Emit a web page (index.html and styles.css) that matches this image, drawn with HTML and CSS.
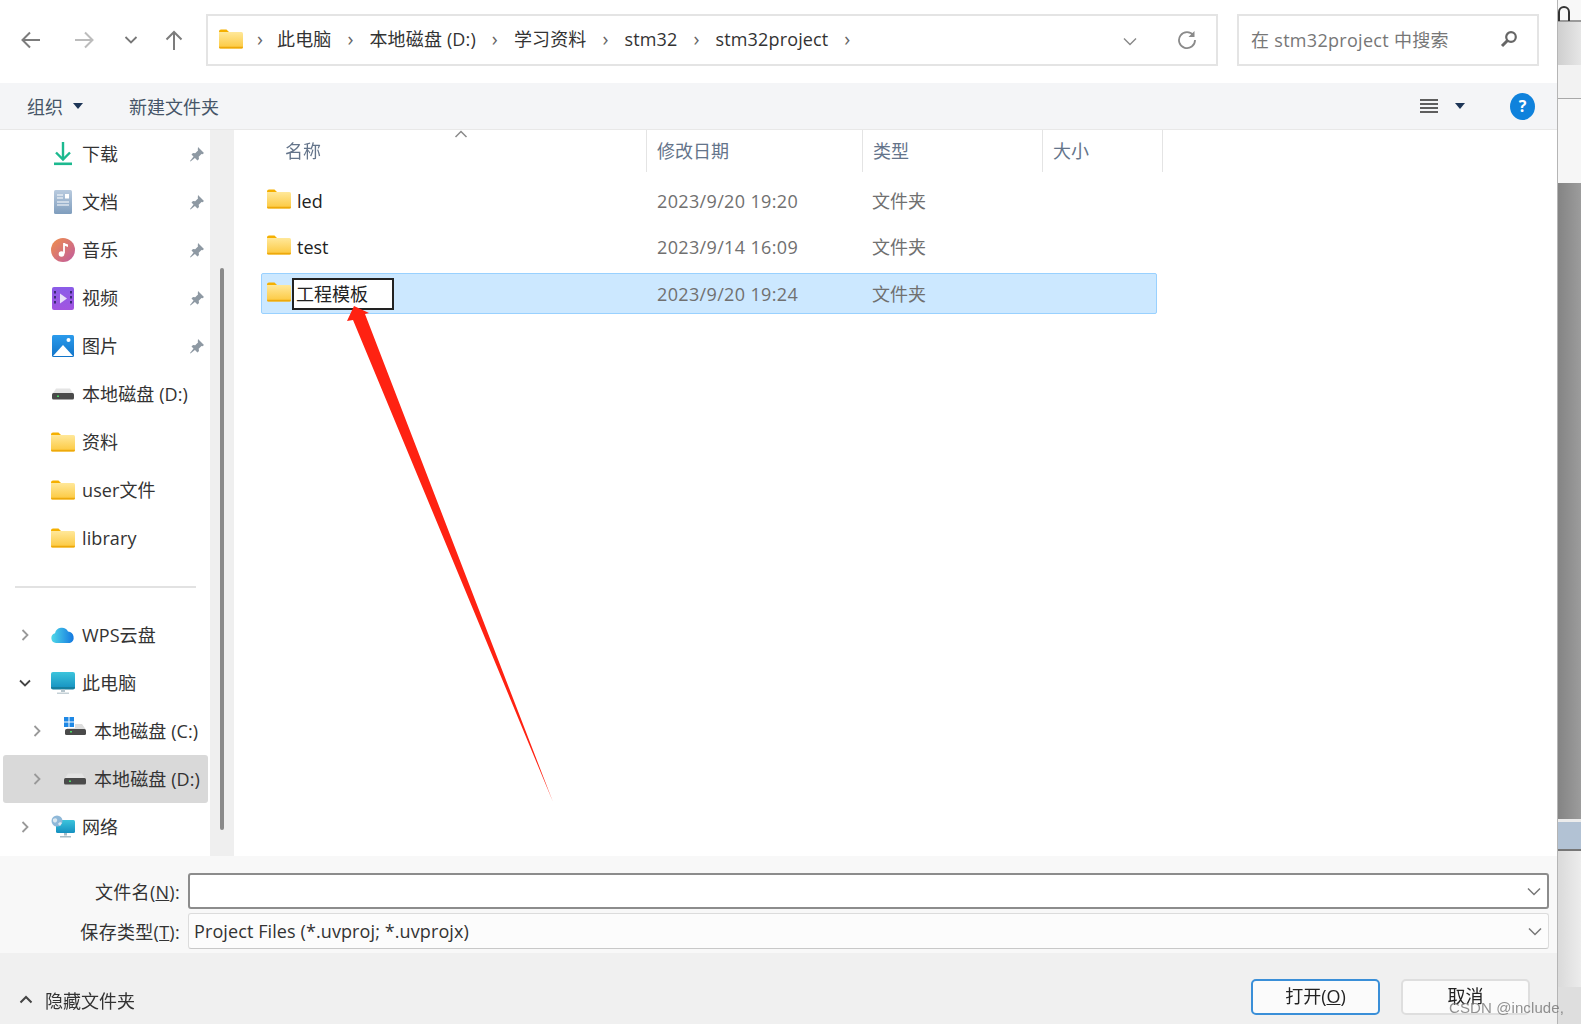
FILE: index.html
```html
<!DOCTYPE html>
<html lang="zh-CN">
<head>
    <meta charset="UTF-8">
    <title>打开项目</title>
    <link rel="stylesheet" href="styles.css">
</head>
<body>
    <!-- 图标 -->
    <svg class="sprite" width="0" height="0">
        <defs>
            <linearGradient id="gFolder" x1="0" y1="0" x2="0" y2="1"><stop offset="0" stop-color="#ffe89a"/><stop offset="1" stop-color="#fcc83d"/></linearGradient>
            <linearGradient id="gDoc" x1="0" y1="0" x2="0" y2="1"><stop offset="0" stop-color="#b9cbdf"/><stop offset="1" stop-color="#7f9dbd"/></linearGradient>
            <linearGradient id="gMusic" x1="0" y1="0" x2="1" y2="1"><stop offset="0" stop-color="#f0904a"/><stop offset="1" stop-color="#c05aa0"/></linearGradient>
            <linearGradient id="gVideo" x1="0" y1="0" x2="0" y2="1"><stop offset="0" stop-color="#8a5ce8"/><stop offset="1" stop-color="#a254e0"/></linearGradient>
            <linearGradient id="gPic" x1="0" y1="0" x2="0" y2="1"><stop offset="0" stop-color="#2b9bec"/><stop offset="1" stop-color="#1274c8"/></linearGradient>
            <linearGradient id="gCloud" x1="0" y1="0" x2="1" y2="0"><stop offset="0" stop-color="#4fd8e8"/><stop offset="1" stop-color="#1478e0"/></linearGradient>
            <linearGradient id="gScreen" x1="0" y1="0" x2="0" y2="1"><stop offset="0" stop-color="#3cc4dc"/><stop offset="1" stop-color="#1590c0"/></linearGradient>

            <symbol id="i-folder" viewBox="0 0 24 20">
                <path d="M0 2.500A2 2 0 0 1 2 .5h5.500l2.500 2.500H0z" fill="#f5b000"/>
                <path d="M0 3h22.500a1.500 1.500 0 0 1 1.500 1.500V18a1.500 1.500 0 0 1-1.500 1.500H1.500A1.500 1.500 0 0 1 0 18z" fill="url(#gFolder)"/>
                <path d="M0 17.800h24V18a1.500 1.500 0 0 1-1.500 1.500H1.500A1.500 1.500 0 0 1 0 18z" fill="#eda90c"/>
            </symbol>
            <symbol id="i-pin" viewBox="0 0 16 16">
                <path d="M9 1l6 6-1.500 1.200-1-.2-2.800 2.800.3 2.200-1.500 1.500L2.500 8.500 4 7l2.200.3L9 4.500l-.2-1z" fill="#8e99a3"/>
                <path d="M5 10l-4 5 .5.5 5-4z" fill="#8e99a3"/>
            </symbol>
            <symbol id="i-drive" viewBox="0 0 22 12">
                <path d="M4 .5h14l3.500 5.500H.5z" fill="#e4e4e4"/>
                <rect x="0" y="5" width="22" height="6.500" rx="1.500" fill="#4a4a4a"/>
                <rect x="5" y="7.500" width="2" height="1.500" fill="#4cd964"/>
            </symbol>
        </defs>
    </svg>

    <div class="window">
        <div class="dialog">
            <!-- 地址栏 -->
            <div class="navbar">
                <div class="nav-buttons">
                    <svg class="nav-btn" width="22" height="20" viewBox="0 0 22 20"><path d="M20 10H3M10 2.500L2.500 10l7.500 7.500" fill="none" stroke="#7c7c7c" stroke-width="2"/></svg>
                    <svg class="nav-btn" width="22" height="20" viewBox="0 0 22 20"><path d="M2 10h17M12 2.500l7.500 7.500-7.500 7.500" fill="none" stroke="#bcbcbc" stroke-width="2"/></svg>
                    <svg class="nav-btn" width="14" height="10" viewBox="0 0 14 10"><path d="M1.500 2l5.500 5.500L12.500 2" fill="none" stroke="#777" stroke-width="1.800"/></svg>
                    <svg class="nav-btn" width="20" height="22" viewBox="0 0 20 22"><path d="M10 21V3M2.500 10.500L10 3l7.500 7.500" fill="none" stroke="#7c7c7c" stroke-width="2"/></svg>
                </div>
                <div class="address">
                    <svg class="addr-folder" width="24" height="20"><use href="#i-folder"/></svg>
                    <span class="crumb-sep">›</span><span>此电脑</span>
                    <span class="crumb-sep">›</span><span>本地磁盘 (D:)</span>
                    <span class="crumb-sep">›</span><span>学习资料</span>
                    <span class="crumb-sep">›</span><span>stm32</span>
                    <span class="crumb-sep">›</span><span>stm32project</span>
                    <span class="crumb-sep">›</span>
                    <svg class="addr-down" width="14" height="9" viewBox="0 0 14 9"><path d="M1 1.500l6 6 6-6" fill="none" stroke="#888" stroke-width="1.400"/></svg>
                    <svg class="addr-refresh" width="20" height="20" viewBox="0 0 20 20"><path d="M16.500 5.500A8 8 0 1 0 18 10" fill="none" stroke="#8a8a8a" stroke-width="1.800"/><path d="M17.500 1v6h-6z" fill="#8a8a8a"/></svg>
                </div>
                <div class="search">
                    <span>在 stm32project 中搜索</span>
                    <svg width="18" height="18" viewBox="0 0 18 18"><circle cx="11" cy="7" r="4.800" fill="none" stroke="#666" stroke-width="2.200"/><path d="M7.500 10.500L2 16" stroke="#666" stroke-width="3"/></svg>
                </div>
            </div>

            <!-- 工具栏 -->
            <div class="toolbar">
                <span class="tool">组织</span><i class="tool-caret"></i>
                <span class="tool tool-new">新建文件夹</span>
                <svg class="view-icon" width="18" height="16" viewBox="0 0 18 16"><path d="M0 2h18M0 6h18M0 10h18M0 14h18" stroke="#2c2c2c" stroke-width="1.600"/></svg>
                <i class="tool-caret view-caret"></i>
                <span class="help">?</span>
            </div>

            <div class="content">
                <!-- 左侧导航 -->
                <div class="sidebar">
                    <div class="tree-row">
                        <span class="caret"></span>
                        <svg class="tree-icon" width="26" height="26" viewBox="0 0 26 26"><path d="M13 1v17M6 11.500l7 7 7-7" fill="none" stroke="#1cb98f" stroke-width="2.400"/><rect x="4" y="21.500" width="18" height="2.600" fill="#1cb98f"/></svg>
                        <span>下载</span>
                        <svg class="pin" width="16" height="16"><use href="#i-pin"/></svg>
                    </div>
                    <div class="tree-row">
                        <span class="caret"></span>
                        <svg class="tree-icon" width="26" height="26" viewBox="0 0 26 26"><rect x="4" y="1" width="18" height="24" rx="1.500" fill="url(#gDoc)"/><path d="M7 6h6M7 9h6M7 13h12M7 16h12" stroke="#fff" stroke-width="1.200"/><rect x="15" y="5" width="4" height="4.500" fill="#fff"/></svg>
                        <span>文档</span>
                        <svg class="pin" width="16" height="16"><use href="#i-pin"/></svg>
                    </div>
                    <div class="tree-row">
                        <span class="caret"></span>
                        <svg class="tree-icon" width="26" height="26" viewBox="0 0 26 26"><circle cx="13" cy="13" r="12" fill="url(#gMusic)"/><path d="M14 6v10.500" stroke="#fff" stroke-width="1.800"/><path d="M14 6l4 1.500v2.500l-4-1.500z" fill="#fff"/><circle cx="11.500" cy="17" r="2.800" fill="#fff"/></svg>
                        <span>音乐</span>
                        <svg class="pin" width="16" height="16"><use href="#i-pin"/></svg>
                    </div>
                    <div class="tree-row">
                        <span class="caret"></span>
                        <svg class="tree-icon" width="26" height="26" viewBox="0 0 26 26"><rect x="2" y="2" width="22" height="23" rx="2" fill="url(#gVideo)"/><path d="M4 6h2v2.500H4zM4 11h2v2.500H4zM4 16h2v2.500H4zM20 6h2v2.500h-2zM20 11h2v2.500h-2zM20 16h2v2.500h-2z" fill="#3c2a78"/><path d="M10 8.500l7 5-7 5z" fill="#e8e0f8"/></svg>
                        <span>视频</span>
                        <svg class="pin" width="16" height="16"><use href="#i-pin"/></svg>
                    </div>
                    <div class="tree-row">
                        <span class="caret"></span>
                        <svg class="tree-icon" width="26" height="26" viewBox="0 0 26 26"><rect x="2" y="2" width="22" height="22" rx="1.500" fill="url(#gPic)"/><path d="M3 23l10-11 10 11z" fill="#fff"/><circle cx="18.500" cy="7" r="2" fill="#fff"/></svg>
                        <span>图片</span>
                        <svg class="pin" width="16" height="16"><use href="#i-pin"/></svg>
                    </div>
                    <div class="tree-row">
                        <span class="caret"></span>
                        <svg class="tree-icon" width="26" height="12"><use href="#i-drive" x="2" width="22" height="12"/></svg>
                        <span>本地磁盘 (D:)</span>
                    </div>
                    <div class="tree-row">
                        <span class="caret"></span>
                        <svg class="tree-icon" width="24" height="20"><use href="#i-folder"/></svg>
                        <span>资料</span>
                    </div>
                    <div class="tree-row">
                        <span class="caret"></span>
                        <svg class="tree-icon" width="24" height="20"><use href="#i-folder"/></svg>
                        <span>user文件</span>
                    </div>
                    <div class="tree-row">
                        <span class="caret"></span>
                        <svg class="tree-icon" width="24" height="20"><use href="#i-folder"/></svg>
                        <span>library</span>
                    </div>

                    <div class="tree-divider"></div>

                    <div class="tree-row">
                        <span class="caret"><svg width="8" height="12" viewBox="0 0 8 12"><path d="M1.500 1l5 5-5 5" fill="none" stroke="#999" stroke-width="1.800"/></svg></span>
                        <svg class="tree-icon" width="26" height="18" viewBox="0 0 26 18"><path d="M6 17a5 5 0 0 1-1-9.800A7 7 0 0 1 18 5.500 6 6 0 0 1 20 17z" fill="url(#gCloud)"/></svg>
                        <span>WPS云盘</span>
                    </div>
                    <div class="tree-row">
                        <span class="caret caret-open"><svg width="12" height="8" viewBox="0 0 12 8"><path d="M1 1.500l5 5 5-5" fill="none" stroke="#444" stroke-width="1.800"/></svg></span>
                        <svg class="tree-icon" width="26" height="24" viewBox="0 0 26 24"><rect x="1" y="1" width="24" height="17" rx="2" fill="url(#gScreen)"/><path d="M1 16h24v.500a2 2 0 0 1-2 2H3a2 2 0 0 1-2-2z" fill="#167f9f"/><path d="M11 18.500h4V21h-4z" fill="#b4c4cc"/><path d="M7 21.500h12V23H7z" fill="#c4d0d6"/></svg>
                        <span>此电脑</span>
                    </div>
                    <div class="tree-row tree-sub">
                        <span class="caret"><svg width="8" height="12" viewBox="0 0 8 12"><path d="M1.500 1l5 5-5 5" fill="none" stroke="#999" stroke-width="1.800"/></svg></span>
                        <svg class="tree-icon icon-up" width="24" height="20" viewBox="0 0 24 20"><path d="M1 1h4.500v4.500H1zM6.500 1H11v4.500H6.500zM1 6.500h4.500V11H1zM6.500 6.500H11V11H6.500z" fill="#1e88e5"/><path d="M12 8h7l3.500 5H4v-1h8z" fill="#ddd"/><rect x="2" y="13" width="21" height="6" rx="1.500" fill="#4a4a4a"/><rect x="7" y="15" width="2" height="1.500" fill="#4cd964"/></svg>
                        <span>本地磁盘 (C:)</span>
                    </div>
                    <div class="tree-row tree-sub is-current">
                        <span class="caret"><svg width="8" height="12" viewBox="0 0 8 12"><path d="M1.500 1l5 5-5 5" fill="none" stroke="#999" stroke-width="1.800"/></svg></span>
                        <svg class="tree-icon" width="26" height="12"><use href="#i-drive" x="2" width="22" height="12"/></svg>
                        <span>本地磁盘 (D:)</span>
                    </div>
                    <div class="tree-row">
                        <span class="caret"><svg width="8" height="12" viewBox="0 0 8 12"><path d="M1.500 1l5 5-5 5" fill="none" stroke="#999" stroke-width="1.800"/></svg></span>
                        <svg class="tree-icon" width="26" height="24" viewBox="0 0 26 24"><rect x="6" y="5" width="19" height="13" rx="1.500" fill="url(#gScreen)"/><path d="M14 18h3v2.500h-3zM10 21h11v1.500H10z" fill="#a8bcc6"/><circle cx="7" cy="6" r="5.500" fill="#8fb8d8"/><path d="M3 4c3-2 5 0 4 2s-3 2-4 0zM8 9c1-2 3-2 4-1l-2 3z" fill="#dce8f0"/></svg>
                        <span>网络</span>
                    </div>
                </div>
                <div class="tree-scroll"><div class="tree-thumb"></div></div>

                <!-- 文件列表 -->
                <div class="files">
                    <div class="file-head">
                        <div class="col-name">名称
                            <svg class="sort-arrow" width="14" height="8" viewBox="0 0 14 8"><path d="M1.500 7L7 1.500 12.500 7" fill="none" stroke="#8a8a8a" stroke-width="1.500"/></svg>
                        </div>
                        <div class="col">修改日期</div>
                        <div class="col">类型</div>
                        <div class="col">大小</div>
                    </div>
                    <div class="file-row">
                        <div class="file-name"><svg width="24" height="20"><use href="#i-folder"/></svg><span>led</span></div>
                        <div class="file-date">2023/9/20 19:20</div>
                        <div class="file-type">文件夹</div>
                    </div>
                    <div class="file-row">
                        <div class="file-name"><svg width="24" height="20"><use href="#i-folder"/></svg><span>test</span></div>
                        <div class="file-date">2023/9/14 16:09</div>
                        <div class="file-type">文件夹</div>
                    </div>
                    <div class="file-row is-selected">
                        <div class="file-name"><svg width="24" height="20"><use href="#i-folder"/></svg><span class="rename">工程模板</span></div>
                        <div class="file-date">2023/9/20 19:24</div>
                        <div class="file-type">文件夹</div>
                    </div>
                </div>
            </div>

            <!-- 文件名 -->
            <div class="form">
                <div class="form-row">
                    <label>文件名(<u>N</u>):</label>
                    <div class="field field-active">
                        <svg width="14" height="9" viewBox="0 0 14 9"><path d="M1 1.500l6 6 6-6" fill="none" stroke="#777" stroke-width="1.500"/></svg>
                    </div>
                </div>
                <div class="form-row">
                    <label>保存类型(<u>T</u>):</label>
                    <div class="field">
                        <span class="field-text">Project Files (*.uvproj; *.uvprojx)</span>
                        <svg width="14" height="9" viewBox="0 0 14 9"><path d="M1 1.500l6 6 6-6" fill="none" stroke="#777" stroke-width="1.500"/></svg>
                    </div>
                </div>
            </div>

            <div class="footer">
                <div class="hide-folders">
                    <svg width="14" height="9" viewBox="0 0 14 9"><path d="M1.500 7.500L7 2l5.500 5.500" fill="none" stroke="#444" stroke-width="2"/></svg>
                    <span>隐藏文件夹</span>
                </div>
                <div class="buttons">
                    <button class="btn btn-primary">打开(<u>O</u>)</button>
                    <button class="btn">取消</button>
                </div>
            </div>
        </div>

        <!-- 右边露出的后面窗口 -->
        <div class="behind">
            <div class="behind-top"><svg width="12" height="16" viewBox="0 0 12 16"><path d="M1 16V7a5 5 0 0 1 10 0v9" fill="none" stroke="#333" stroke-width="2"/></svg></div>
            <div class="behind-tab"></div>
            <div class="behind-panel"></div>
            <div class="behind-dark"></div>
            <div class="behind-blue"></div>
            <div class="behind-low"></div>
            <div class="behind-end"></div>
        </div>
    </div>

    <!-- 红色箭头 -->
    <svg class="red-arrow" width="1581" height="1024" viewBox="0 0 1581 1024"><polygon points="354,306 369,313 365,314 553,802 353,320 347,321" fill="#ff2212"/></svg>
    <div class="watermark">CSDN @include,</div>
</body>
</html>
```

FILE: styles.css
```css
* {
    box-sizing: border-box;
}
html, body {
    margin: 0;
    height: 100%;
    overflow: hidden;
}
body {
    position: relative;
    font-family: "Open Sans", "Noto Sans CJK SC", sans-serif;
    font-size: 18px;
    color: #333;
    background-color: #fff;
}
.sprite {
    position: absolute;
}
svg {
    display: block;
    flex: none;
}
.window {
    display: flex;
    height: 1024px;
    filter: blur(0.5px);
}
.dialog {
    width: 1557px;
    display: flex;
    flex-direction: column;
    background-color: #fff;
}

/* 地址栏 */
.navbar {
    height: 83px;
    padding-top: 14px;
    display: flex;
    align-items: flex-start;
}
.nav-buttons {
    width: 206px;
    height: 52px;
    display: flex;
    align-items: center;
    padding-left: 20px;
}
.nav-btn {
    margin-right: 31px;
}
.nav-btn:nth-child(3) {
    margin-right: 26px;
    margin-left: -2px;
}
.address {
    width: 1012px;
    height: 52px;
    display: flex;
    align-items: center;
    border: 2px solid #e4e4e4;
    padding: 0 0 3px 11px;
    line-height: 1;
    letter-spacing: 0.15px;
}
.crumb-sep {
    width: 38px;
    text-align: center;
    color: #666;
    font-size: 20px;
}
.addr-folder + .crumb-sep {
    width: 34px;
}
.addr-down {
    margin-left: auto;
    margin-top: 5px;
}
.addr-refresh {
    margin-left: 40px;
    margin-right: 19px;
    margin-top: 3px;
}
.search {
    width: 302px;
    height: 52px;
    margin-left: 19px;
    display: flex;
    align-items: center;
    justify-content: space-between;
    border: 2px solid #e4e4e4;
    padding: 0 19px 3px 12px;
    color: #777;
    letter-spacing: 0.3px;
}

/* 工具栏 */
.toolbar {
    height: 47px;
    display: flex;
    align-items: center;
    background-color: #f4f5f7;
    border-bottom: 1px solid #e8e8e8;
    padding-left: 27px;
    color: #465568;
}
.tool-caret {
    width: 0;
    height: 0;
    margin-left: 10px;
    border-left: 5.5px solid transparent;
    border-right: 5.5px solid transparent;
    border-top: 6px solid #1d3557;
}
.tool-new {
    margin-left: 46px;
}
.view-icon {
    margin-left: auto;
}
.view-caret {
    margin-left: 17px;
}
.help {
    width: 25px;
    height: 27px;
    margin-left: 45px;
    margin-right: 22px;
    border-radius: 50%;
    background-color: #0f82dc;
    color: #fff;
    font-size: 16px;
    font-weight: 700;
    line-height: 27px;
    text-align: center;
}

/* 左侧导航 */
.content {
    flex: 1;
    display: flex;
    min-height: 0;
}
.sidebar {
    width: 210px;
    line-height: 1;
    overflow: hidden;
}
.tree-row {
    height: 48px;
    margin: 0 2px 0 3px;
    display: flex;
    align-items: center;
    border-radius: 3px;
    letter-spacing: 0.1px;
}
.caret {
    width: 47px;
    flex: none;
    padding-left: 18px;
}
.caret-open {
    padding-left: 16px;
}
.tree-icon {
    width: 26px;
    margin-right: 6px;
}
.tree-sub {
    padding-left: 12px;
}
.icon-up {
    margin-top: -10px;
}
.is-current {
    background-color: #d9d9d9;
}
.pin {
    margin-left: auto;
    margin-right: 3px;
}
.tree-divider {
    height: 2px;
    width: 181px;
    margin: 24px 0 23px 15px;
    background-color: #e2e2e2;
}
.tree-scroll {
    width: 24px;
    padding: 138px 0 0 10px;
    background-color: #efefef;
}
.tree-thumb {
    width: 4px;
    height: 562px;
    background-color: #8a8a8a;
    border-radius: 2px;
}

/* 文件列表 */
.files {
    flex: 1;
}
.file-head {
    height: 42px;
    display: grid;
    grid-template-columns: 413px 216px 180px 120px;
    margin-bottom: 8px;
    color: #64748a;
    line-height: 42px;
}
.col-name {
    position: relative;
    padding-left: 51px;
    border-right: 1px solid #e4e4e4;
}
.col {
    padding-left: 10px;
    border-right: 1px solid #e4e4e4;
}
.sort-arrow {
    position: absolute;
    left: 220px;
    top: 0;
}
.file-row {
    width: 896px;
    height: 41px;
    margin: 0 0 5.5px 27px;
    display: grid;
    grid-template-columns: 386px 216px 180px;
    align-items: center;
    border: 1px solid transparent;
    border-radius: 2px;
    line-height: 1;
}
.file-name {
    display: flex;
    align-items: center;
    padding-left: 5px;
    color: #222;
}
.file-name svg {
    margin-top: -4px;
    margin-right: 6px;
}
.file-date {
    padding-left: 9px;
    color: #707070;
    letter-spacing: 0.35px;
}
.file-type {
    padding-left: 8px;
    color: #707070;
}
.is-selected {
    background-color: #cce8ff;
    border-color: #99d1ff;
}
.rename {
    width: 102px;
    height: 32px;
    margin-left: -5px;
    padding-left: 2px;
    border: 2px solid #222;
    background-color: #fff;
    line-height: 28px;
}

/* 文件名 */
.form {
    height: 97px;
    padding-top: 17px;
    background-color: #f8f8f8;
}
.form-row {
    height: 36px;
    margin-bottom: 4px;
    display: flex;
    align-items: center;
}
.form-row label {
    width: 188px;
    padding-right: 8px;
    text-align: right;
    white-space: nowrap;
    letter-spacing: 0.3px;
}
.field {
    width: 1361px;
    height: 36px;
    display: flex;
    align-items: center;
    justify-content: space-between;
    padding: 0 6px 0 5px;
    border: 1px solid #dcdcdc;
    border-bottom-color: #c8c8c8;
    border-radius: 3px;
    background-color: #fcfcfc;
}
.field-text {
    letter-spacing: 0.1px;
}
.field svg {
    margin-left: auto;
}
.field-active {
    border: 2px solid #8c8c8c;
    background-color: #fff;
}

.footer {
    height: 71px;
    display: flex;
    justify-content: space-between;
    background-color: #f0f0f0;
}
.hide-folders {
    display: flex;
    align-items: center;
    gap: 12px;
    padding: 22px 0 0 19px;
    height: 71px;
}
.buttons {
    display: flex;
    gap: 21px;
    padding: 26px 27px 0 0;
}
.btn {
    width: 129px;
    height: 36px;
    font: inherit;
    color: #222;
    line-height: 1;
    background-color: #fbfbfb;
    border: 2px solid #dedede;
    border-radius: 5px;
    padding: 0 0 3px;
}
.btn-primary {
    border-color: #3a8fd8;
}

/* 右边露出的后面窗口 */
.behind {
    width: 24px;
    display: flex;
    flex-direction: column;
    border-left: 1px solid #b5b5b5;
    overflow: hidden;
}
.behind-top {
    height: 22px;
    padding-top: 5px;
    border-bottom: 2px solid #9a9a9a;
    background-color: #f8f8f8;
}
.behind-tab {
    height: 43px;
    background: linear-gradient(to right, #cfcfcf, #e6e6e6);
}
.behind-panel {
    height: 118px;
    background: linear-gradient(to bottom, #f2f2f2 0, #f2f2f2 28%, #a8a8a8 28%, #a8a8a8 29%, #f6f6f6 29%);
}
.behind-dark {
    height: 636px;
    background: linear-gradient(to right, #848484, #9c9c9c);
}
.behind-blue {
    height: 32px;
    border-top: 3px solid #ececec;
    border-bottom: 2px solid #767676;
    background-color: #b2c2d4;
}
.behind-low {
    height: 136px;
    background: linear-gradient(to right, #dadada, #ececec);
}
.behind-end {
    flex: 1;
    background-color: #dedede;
}

/* 盖在上面的箭头和水印 */
.red-arrow {
    position: absolute;
    left: 0;
    top: 0;
    pointer-events: none;
}
.watermark {
    position: absolute;
    left: 1449px;
    top: 998px;
    font-family: "Liberation Sans", "Noto Sans CJK SC", sans-serif;
    font-size: 15px;
    line-height: 19px;
    letter-spacing: 0.1px;
    color: rgba(110, 110, 110, 0.75);
    white-space: nowrap;
}
```
